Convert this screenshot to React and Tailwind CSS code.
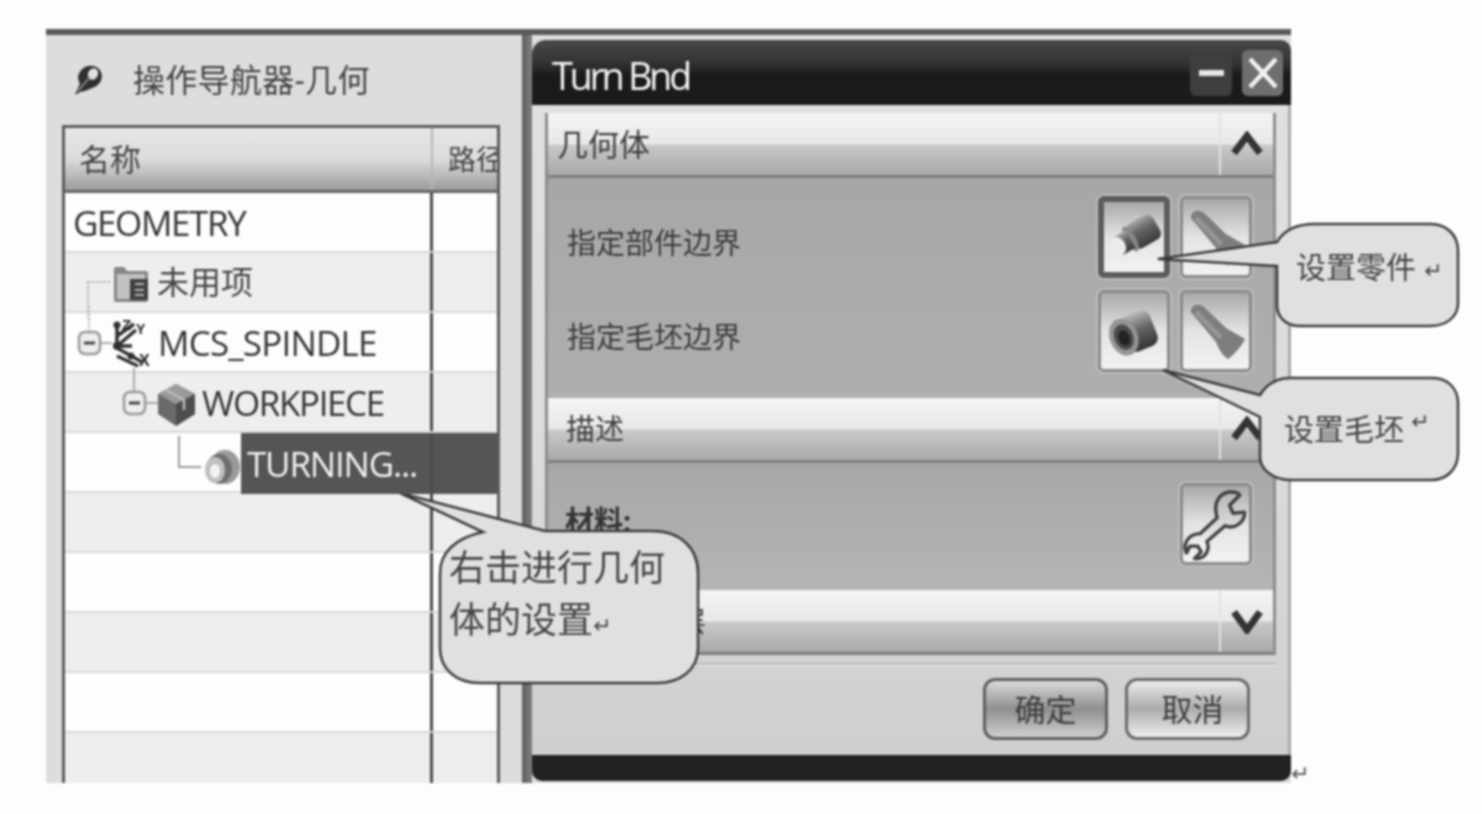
const cjk = 'font-["Noto_Sans","Noto_Sans_CJK_SC",sans-serif]';

function NavIcon() {
  return (
    <svg width="30" height="34" viewBox="0 0 30 34">
      <ellipse cx="17" cy="14" rx="12" ry="11" fill="#2f2f2f" transform="rotate(-25 17 14)" />
      <ellipse cx="20" cy="11" rx="5" ry="6" fill="#e2e2e2" transform="rotate(25 20 11)" />
      <path d="M8 18 L2 32 L7 29 C12 28 16 27 20 24 Z" fill="#2f2f2f" />
      <path d="M5 28 L17 14" stroke="#9a9a9a" strokeWidth="1.5" />
    </svg>
  );
}

function FolderRowIcon() {
  return (
    <svg width="64" height="60" viewBox="0 0 64 60" className="overflow-visible">
      <path d="M2 30 H26 M2 30 V67" stroke="#aaa" strokeWidth="2" strokeDasharray="2 2" fill="none" />
      <path d="M28 17 Q28 15 30 15 H38 L41 19 H60 Q62 19 62 21 V48 Q62 50 60 50 H30 Q28 50 28 48 Z" fill="#858585" />
      <rect x="31" y="22" width="28" height="25" fill="#c2c2c2" />
      <rect x="44" y="27" width="18" height="21" fill="#404040" />
      <path d="M49 32 H58 M49 38 H58 M49 43 H58" stroke="#b5b5b5" strokeWidth="2" />
    </svg>
  );
}

function MinusBox({ x, y }) {
  return (
    <g>
      <rect x={x} y={y} width="21" height="22" rx="6" fill="#eee" stroke="#999" strokeWidth="2.5" />
      <path d={`M${x + 5} ${y + 11} H${x + 16}`} stroke="#444" strokeWidth="3" />
    </g>
  );
}

function McsIcon() {
  return (
    <svg width="76" height="60" viewBox="0 0 76 60" className="overflow-visible">
      <path d="M13 -6 V20" stroke="#aaa" strokeWidth="2" strokeDasharray="2 2" />
      <path d="M24 31 H36" stroke="#aaa" strokeWidth="2" />
      <path d="M41 34 V12 M41 34 L60 18 M41 36 L66 50 M41 24 L58 12 M41 44 L62 54 M41 34 L56 34" stroke="#2f2f2f" strokeWidth="3.5" fill="none" />
      <MinusBox x={3} y={20} />
      <circle cx="41" cy="13" r="3.5" fill="#2f2f2f" />
      <circle cx="41" cy="34" r="4" fill="#2f2f2f" />
      <circle cx="55" cy="44" r="3.5" fill="#2f2f2f" />
      <text x="46" y="18" fontSize="15" fontWeight="700" fill="#222" fontFamily="Liberation Sans">Z</text>
      <text x="60" y="22" fontSize="14" fontWeight="700" fill="#222" fontFamily="Liberation Sans">Y</text>
      <text x="63" y="54" fontSize="16" fontWeight="700" fill="#222" fontFamily="Liberation Sans">X</text>
    </svg>
  );
}

function WorkpieceIcon() {
  return (
    <svg width="76" height="60" viewBox="0 0 76 60" className="overflow-visible">
      <path d="M14 -4 V20" stroke="#aaa" strokeWidth="2" />
      <path d="M25 31 H38" stroke="#aaa" strokeWidth="2" />
      <MinusBox x={4} y={20} />
      <path d="M38 22 L56 12 L75 22 V42 L56 54 L38 42 Z" fill="#6a6a6a" />
      <path d="M38 22 L56 12 L75 22 L56 32 Z" fill="#9a9a9a" />
      <path d="M56 32 V54 L75 42 V22 Z" fill="#4d4d4d" />
      <path d="M46 18 L64 28 V38" stroke="#bdbdbd" strokeWidth="2.5" fill="none" />
    </svg>
  );
}

function TurningIcon() {
  return (
    <svg width="66" height="60" viewBox="0 0 66 60" className="overflow-visible">
      <path d="M4 2 V33 H26" stroke="#999" strokeWidth="2" fill="none" />
      <ellipse cx="50" cy="33" rx="15" ry="17" fill="#9a9a9a" />
      <ellipse cx="44" cy="35" rx="13" ry="15" fill="#6f6f6f" />
      <ellipse cx="40" cy="36" rx="10" ry="13" fill="#c0c0c0" />
      <ellipse cx="40" cy="37" rx="5" ry="7" fill="#f4f4f4" />
    </svg>
  );
}

function PartIcon() {
  return (
    <svg width="60" height="70" viewBox="0 0 60 70">
      <defs>
        <linearGradient id="partg" x1="0" y1="0" x2="0" y2="1">
          <stop offset="0" stopColor="#a8a8a8" />
          <stop offset="0.4" stopColor="#666" />
          <stop offset="1" stopColor="#3a3a3a" />
        </linearGradient>
      </defs>
      <g transform="translate(30 35) rotate(-30)">
        <rect x="-4" y="-14" width="30" height="28" rx="7" fill="url(#partg)" />
        <ellipse cx="-4" cy="0" rx="5" ry="14" fill="#888" />
        <rect x="-18" y="-10" width="14" height="20" fill="url(#partg)" />
        <ellipse cx="-18" cy="0" rx="7" ry="9.5" fill="#ececec" />
      </g>
    </svg>
  );
}

function BlankIcon() {
  return (
    <svg width="66" height="76" viewBox="0 0 66 76">
      <defs>
        <linearGradient id="blankg" x1="0" y1="0" x2="0" y2="1">
          <stop offset="0" stopColor="#bbb" />
          <stop offset="0.45" stopColor="#666" />
          <stop offset="1" stopColor="#333" />
        </linearGradient>
      </defs>
      <g transform="rotate(-22 33 40)">
        <rect x="22" y="21" width="32" height="38" rx="9" fill="url(#blankg)" />
        <ellipse cx="22" cy="40" rx="14" ry="19" fill="#949494" />
        <ellipse cx="22" cy="40" rx="9.5" ry="13" fill="#4a4a4a" />
        <ellipse cx="22" cy="41" rx="5.5" ry="8" fill="#222" />
      </g>
    </svg>
  );
}

function TorchIcon() {
  return (
    <svg width="66" height="76" viewBox="0 0 66 76">
      <path d="M8 19 C8 11 16 10 21 14 L43 35 L62 46 C60 51 52 61 45 66 C40 63 36 57 33 49 Z" fill="#7d7d7d" />
      <path d="M13 19 L38 45" stroke="#969696" strokeWidth="5" />
    </svg>
  );
}

function WrenchIcon() {
  return (
    <svg width="66" height="76" viewBox="6 7 58 67">
      <defs>
        <linearGradient id="wrg" x1="0" y1="0" x2="0" y2="1">
          <stop offset="0" stopColor="#b5b5b5" />
          <stop offset="1" stopColor="#fff" />
        </linearGradient>
      </defs>
      <path d="M38 17 C44 10 54 12 56 15 L47 24 L50 31 L60 30 C61 38 52 46 43 42 L27 56 C30 63 26 70 19 71 L16 71 L22 65 L19 60 L12 60 L9 66 C5 58 11 49 21 49 L36 35 C34 28 34 22 38 17 Z" fill="url(#wrg)" stroke="#3f3f3f" strokeWidth="3" strokeLinejoin="round" />
    </svg>
  );
}

function ToolButton({ selected, children }) {
  return (
    <div className={`w-[72px] h-[82px] rounded-md flex items-center justify-center bg-gradient-to-b from-[#a9a9a9] via-[#e4e4e4] to-[#f2f2f2] ring-2 ring-[#bdbdbd] ${selected ? 'border-[6px] border-[#5c5c5c]' : 'border-[3px] border-[#8a8a8a]'}`}>
      {children}
    </div>
  );
}

function SectionHeader({ title, icon, pl, size }) {
  return (
    <div className="h-[65px] flex border-b-[3px] border-[#7f7f7f] bg-[linear-gradient(#f4f4f4_0%,#e8e8e8_50%,#c9c9c9_52%,#a9a9a9_100%)]">
      <div className={`flex-1 flex items-center text-[#3d3d3d] ${pl} ${size} ${cjk}`}>{title}</div>
      <div className="w-[54px] border-l-[2px] border-[#e2e2e2] flex items-center justify-center">
        <svg width="32" height="26" viewBox="0 0 32 26">
          <path d={icon === 'up' ? 'M3 22 L16 5 L29 22' : 'M3 4 L16 22 L29 4'} fill="none" stroke="#333" strokeWidth="7" />
        </svg>
      </div>
    </div>
  );
}

function TreeRow({ shade, pl, children }) {
  return (
    <div className={`h-[60px] flex border-b-[2px] border-[#d8d8d8] ${shade ? 'bg-[#eeeeee]' : 'bg-[#fdfdfd]'}`}>
      <div className={`w-[368px] border-r-[3px] border-[#4a4a4a] flex items-center ${pl}`}>{children}</div>
      <div className="flex-1" />
    </div>
  );
}

const rowText = 'mt-[2px] text-[35px] text-[#333] tracking-[-1.4px] font-["Open_Sans",sans-serif]';

function Bubble({ className, w, h, d, children }) {
  return (
    <div className={`absolute ${className}`} style={{ width: w, height: h }}>
      <svg width={w} height={h} viewBox={`0 0 ${w} ${h}`} className="absolute inset-0">
        <path d={d} fill="#dfe0e2" stroke="#3a3a3a" strokeWidth="2.5" />
      </svg>
      {children}
    </div>
  );
}

export default function App() {
  return (
    <div className="relative w-[1482px] h-[814px] bg-[#fdfdfd] overflow-hidden pt-[29px] pl-[46px] blur-[0.8px]">
      <div className="w-[1245px] h-[754px] flex border-t-[6px] border-[#5a5a5a]">
        {/* left navigator */}
        <div className="w-[476px] bg-[#dcddde] flex flex-col">
          <div className={`h-[90px] flex items-center text-[32px] tracking-[0.3px] text-[#444] ${cjk}`}>
            <div className="ml-[27px] w-[60px]"><NavIcon /></div>
            <span>操作导航器-几何</span>
          </div>
          <div className="ml-[16px] w-[438px] flex-1 overflow-hidden border-x-[3px] border-t-[3px] border-[#5c5c5c]">
            <div className="h-[65px] flex border-b-[3px] border-[#666] bg-[linear-gradient(#e6e6e6_0%,#dcdcdc_50%,#9c9c9c_100%)]">
              <div className={`w-[368px] border-r-[2px] border-[#b5b5b5] pl-[14px] flex items-center text-[31px] text-[#444] ${cjk}`}>名称</div>
              <div className={`flex-1 overflow-hidden pl-[15px] flex items-center text-[28px] text-[#444] whitespace-nowrap ${cjk}`}>路径</div>
            </div>
            <TreeRow pl="pl-[8px]"><span className={rowText}>GEOMETRY</span></TreeRow>
            <TreeRow shade pl="pl-[21px]">
              <FolderRowIcon />
              <span className={`ml-[7px] text-[32px] text-[#444] ${cjk}`}>未用项</span>
            </TreeRow>
            <TreeRow pl="pl-[11px]">
              <McsIcon />
              <span className='ml-[6px] mt-[2px] text-[35px] text-[#333] tracking-[-0.8px] font-["Open_Sans",sans-serif]'>MCS_SPINDLE</span>
            </TreeRow>
            <TreeRow shade pl="pl-[55px]">
              <WorkpieceIcon />
              <span className={`ml-[6px] ${rowText}`}>WORKPIECE</span>
            </TreeRow>
            <div className="h-[60px] relative z-10 flex items-start border-b-[2px] border-[#d8d8d8] bg-[#fdfdfd]">
              <div className="w-[368px] h-[61px] border-r-[3px] border-[#4a4a4a] flex items-center pl-[110px]">
                <TurningIcon />
                <div className="flex-1 h-full bg-[#555] pl-[6px] flex items-center">
                  <span className='mt-[2px] text-[35px] text-[#f2f2f2] tracking-[-1.2px] font-["Open_Sans",sans-serif]'>TURNING...</span>
                </div>
              </div>
              <div className="flex-1 h-[61px] bg-[#555]" />
            </div>
            {[true, false, true, false, true].map((shade, i) => (
              <TreeRow key={i} shade={shade} pl="pl-0" />
            ))}
          </div>
        </div>

        {/* splitter */}
        <div className="w-[10px] bg-gradient-to-r from-[#5e5e5e] to-[#808080]" />

        {/* dialog */}
        <div className="w-[759px] flex flex-col pt-[5px] pb-[2px] bg-[#dcddde]">
          <div className="h-[65px] rounded-tl-[14px] rounded-tr-[10px] bg-[linear-gradient(#4a4a4a_0%,#333_35%,#1a1a1a_55%,#1c1c1c_100%)] flex items-center pl-[20px] pr-[8px]">
            <span className='flex-1 mt-[5px] text-[38px] text-[#f4f4f4] tracking-[-3.4px] font-["Open_Sans",sans-serif]'>Turn Bnd</span>
            <div className="w-[42px] h-[46px] rounded-md bg-[#3e3e3e] flex items-center justify-center">
              <div className="w-[25px] h-[6px] bg-[#e8e8e8]" />
            </div>
            <div className="ml-[10px] w-[41px] h-[46px] rounded-md bg-[#6e6e6e] flex items-center justify-center">
              <svg width="32" height="36" viewBox="0 0 32 36">
                <path d="M3 4 L29 32 M29 4 L3 32" stroke="#f2f2f2" strokeWidth="4.5" />
              </svg>
            </div>
          </div>
          <div className="flex-1 flex flex-col border-r-[3px] border-[#a9a9a9] pl-[13px] pr-[12px] pt-[8px] bg-gradient-to-b from-[#e0e0e0] via-[#dcdcdc] to-[#cfcfcf]">
            <div className="border-x-[3px] border-[#8d8d8d]">
              <SectionHeader title="几何体" icon="up" pl="pl-[9px]" size="text-[31px]" />
              <div className="h-[220px] bg-gradient-to-b from-[#a6a7a8] to-[#aeafb0] pl-[19px] pr-[21px] pt-[18px] flex flex-col gap-[12px]">
                <div className="flex items-center">
                  <span className={`flex-1 pt-[12px] text-[29px] text-[#3a3a3a] ${cjk}`}>指定部件边界</span>
                  <div className="flex gap-[10px]">
                    <ToolButton selected><PartIcon /></ToolButton>
                    <ToolButton><TorchIcon /></ToolButton>
                  </div>
                </div>
                <div className="flex items-center">
                  <span className={`flex-1 pt-[12px] text-[29px] text-[#3a3a3a] ${cjk}`}>指定毛坯边界</span>
                  <div className="flex gap-[10px]">
                    <ToolButton><BlankIcon /></ToolButton>
                    <ToolButton><TorchIcon /></ToolButton>
                  </div>
                </div>
              </div>
              <SectionHeader title="描述" icon="up" pl="pl-[18px]" size="text-[29px]" />
              <div className="h-[127px] bg-gradient-to-b from-[#a6a7a8] to-[#b4b5b6] pl-[17px] pr-[21px] pt-[20px] flex justify-between">
                <span className={`mt-[16px] text-[29px] font-bold text-[#333] ${cjk}`}>材料:</span>
                <ToolButton><WrenchIcon /></ToolButton>
              </div>
              <SectionHeader title="布局和图层" icon="down" pl="pl-[18px]" size="text-[28px]" />
            </div>
            <div className="mt-[8px] h-[3px] bg-[#b9b9b9] border-b border-[#f2f2f2]" />
            <div className="flex justify-end gap-[17px] pr-[26px] pt-[12px]">
              <div className={`w-[125px] h-[62px] rounded-xl border-[3px] border-[#5e5e5e] flex items-center justify-center text-[31px] text-[#3d3d3d] bg-gradient-to-b from-[#dadada] via-[#8f8f8f] to-[#d0d0d0] ${cjk}`}>确定</div>
              <div className={`w-[125px] h-[62px] rounded-xl border-[3px] border-[#6a6a6a] pl-[10px] flex items-center justify-center text-[31px] text-[#3d3d3d] bg-gradient-to-b from-[#ececec] via-[#ababab] to-[#f0f0f0] ${cjk}`}>取消</div>
            </div>
          </div>
          <div className="h-[26px] bg-[#222] rounded-bl-[10px] rounded-br-[10px]" />
        </div>
      </div>

      {/* stray paragraph mark */}
      <span className='absolute left-[1291px] top-[757px] text-[22px] text-[#555] font-["DejaVu_Sans",sans-serif]'>↵</span>

      {/* callouts */}
      <Bubble
        className="left-[1150px] top-[215px]"
        w={312}
        h={116}
        d="M8 44 L127 27 C134 15 148 9 165 9 L280 9 C297 9 308 20 308 36 L308 88 C308 103 295 111 280 111 L150 111 C138 111 127 104 127 90 L127 51 Z"
      >
        <span className={`absolute left-[146px] top-[29px] text-[30px] text-[#444] whitespace-nowrap ${cjk}`}>设置零件<span className='ml-[8px] text-[22px] font-["DejaVu_Sans",sans-serif]'>↵</span></span>
      </Bubble>
      <Bubble
        className="left-[1155px] top-[365px]"
        w={308}
        h={120}
        d="M8 5 L105 30 C112 19 122 13 135 13 L278 13 C293 13 303 24 303 38 L303 88 C303 104 292 115 276 115 L135 115 C118 115 105 104 105 92 L105 52 Z"
      >
        <span className={`absolute left-[129px] top-[41px] text-[30px] text-[#444] whitespace-nowrap ${cjk}`}>设置毛坯</span>
        <span className='absolute left-[256px] top-[40px] text-[22px] text-[#444] font-["DejaVu_Sans",sans-serif]'>↵</span>
      </Bubble>
      <Bubble
        className="left-[395px] top-[488px]"
        w={308}
        h={200}
        d="M5 5 L150 43 L258 43 C285 43 303 60 303 85 L303 160 C303 182 285 195 262 195 L85 195 C62 195 45 182 45 160 L45 85 C45 65 60 50 88 44 Z"
      >
        <span className={`absolute left-[54px] top-[54px] text-[36px] leading-[52px] text-[#444] whitespace-nowrap ${cjk}`}>
          右击进行几何<br />体的设置<span className='text-[22px] font-["DejaVu_Sans",sans-serif]'>↵</span>
        </span>
      </Bubble>
    </div>
  );
}
